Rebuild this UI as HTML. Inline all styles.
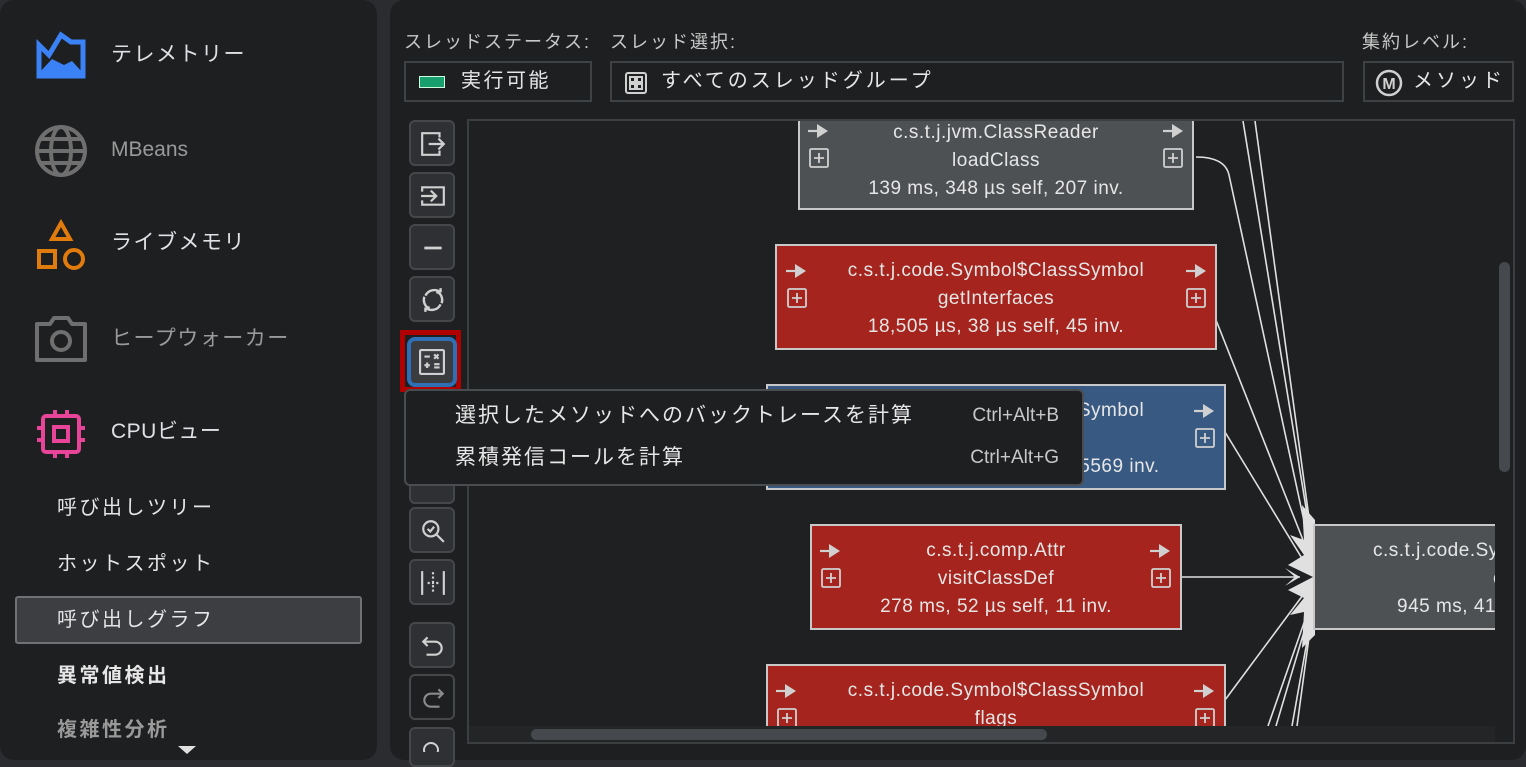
<!DOCTYPE html>
<html><head><meta charset="utf-8"><style>
*{margin:0;padding:0;box-sizing:border-box}
body{width:1526px;height:763px;background:#2a2c2f;position:relative;overflow:hidden;font-family:"Liberation Sans","Noto Sans CJK JP",sans-serif;color:#dfe1e5}
.a{position:absolute}
.panel{position:absolute;background:#1e1f21;border-radius:14px}
.nav{position:absolute;left:111px;font-size:21px;line-height:28px;color:#dfe1e5;letter-spacing:1.5px}
.sub{position:absolute;left:57px;font-size:20px;line-height:28px;color:#e6e6e6;letter-spacing:2.5px}
.lbl{position:absolute;top:30px;font-size:18px;color:#c8c8c8;line-height:24px;letter-spacing:2px}
.combo{position:absolute;top:61px;height:41px;border:2px solid #3f4245;background:#1e1f21;font-size:20px;line-height:37px;color:#e6e6e6}
.btn{position:absolute;left:409px;width:46px;height:46px;background:#2e3033;border:2px solid #45484b;border-radius:6px}
.btn svg{position:absolute;left:9px;top:9px}
.node{position:absolute;border:2px solid #c8c8c8;font-size:19px;color:#e6e6e6;letter-spacing:0.5px}
.node .t{position:absolute;left:0;right:0;text-align:center;line-height:22px}
</style></head><body>
<div class="panel" style="left:0;top:0;width:377px;height:760px"></div>
<div class="panel" style="left:390px;top:0;width:1136px;height:760px"></div>

<svg class="a" style="left:36px;top:31px" width="50" height="48" viewBox="0 0 50 48"><path d="M3 14 L13 24 L25 4 L35 11 L47 11 L47 45 L3 45 Z" fill="none" stroke="#3b82f6" stroke-width="5"/><path d="M3 42 L16 28 L28 34 L36 30 L47 42 L47 45 L3 45Z" fill="#3b82f6"/></svg>
<svg class="a" style="left:34px;top:124px" width="54" height="54" viewBox="0 0 54 54" fill="none" stroke="#6f6f6f" stroke-width="4"><circle cx="27" cy="27" r="24"/><ellipse cx="27" cy="27" rx="10" ry="24"/><path d="M3 27H51M6 15H48M6 39H48"/></svg>
<svg class="a" style="left:36px;top:218px" width="52" height="52" viewBox="0 0 52 52" fill="none" stroke="#e07b0c" stroke-width="4"><path d="M16 21 L25 5 L34 21Z"/><rect x="3" y="33" width="16" height="16"/><circle cx="38" cy="41" r="9"/></svg>
<svg class="a" style="left:34px;top:314px" width="54" height="50" viewBox="0 0 54 50" fill="none" stroke="#6f6f6f" stroke-width="4"><path d="M3 10 H16 L20 4 H34 L38 10 H51 V46 H3Z" stroke-linejoin="round"/><circle cx="27" cy="27" r="9"/></svg>
<svg class="a" style="left:36px;top:409px" width="50" height="50" viewBox="0 0 50 50" fill="none" stroke="#e8459a" stroke-width="4"><rect x="7" y="7" width="36" height="36" rx="3"/><rect x="18" y="18" width="14" height="14"/><path d="M19 1V7M31 1V7M19 43V49M31 43V49M1 19H7M1 31H7M43 19H49M43 31H49"/></svg>

<div class="nav" style="top:41px">テレメトリー</div>
<div class="nav" style="top:136px;color:#9a9a9a;letter-spacing:0">MBeans</div>
<div class="nav" style="top:229px">ライブメモリ</div>
<div class="nav" style="top:325px;color:#9a9a9a">ヒープウォーカー</div>
<div class="nav" style="top:418px;letter-spacing:0.5px">CPUビュー</div>

<div class="a" style="left:15px;top:596px;width:347px;height:48px;background:#3c3e41;border:2px solid #6f7174;border-radius:3px"></div>
<div class="sub" style="top:494px">呼び出しツリー</div>
<div class="sub" style="top:550px">ホットスポット</div>
<div class="sub" style="top:606px">呼び出しグラフ</div>
<div class="sub" style="top:662px;font-weight:bold">異常値検出</div>
<div class="sub" style="top:716px;color:#9a9a9a;font-weight:bold;height:24px;overflow:hidden">複雑性分析</div>
<div class="a" style="left:178px;top:746px;width:0;height:0;border-left:9px solid transparent;border-right:9px solid transparent;border-top:8px solid #e0e0e0"></div>

<div class="lbl" style="left:404px">スレッドステータス:</div>
<div class="lbl" style="left:610px">スレッド選択:</div>
<div class="lbl" style="left:1362px">集約レベル:</div>
<div class="combo" style="left:404px;width:188px"><span class="a" style="left:13px;top:13px;width:26px;height:12px;background:#17a06e;border:1px solid #cfd"></span><span class="a" style="left:55px;top:0;letter-spacing:2.5px">実行可能</span></div>
<div class="combo" style="left:610px;width:734px"><svg class="a" style="left:13px;top:9px" width="22" height="22" viewBox="0 0 22 22" fill="none" stroke="#d0d0d0" stroke-width="2"><rect x="1" y="1" width="20" height="20" rx="2"/><rect x="5" y="5" width="5" height="5"/><rect x="12" y="5" width="5" height="5"/><rect x="5" y="12" width="5" height="5"/><rect x="12" y="12" width="5" height="5"/></svg><span class="a" style="left:49px;top:0;letter-spacing:3px">すべてのスレッドグループ</span></div>
<div class="combo" style="left:1363px;width:151px"><svg class="a" style="left:10px;top:6px" width="28" height="28" viewBox="0 0 28 28"><circle cx="14" cy="14" r="12" fill="none" stroke="#d0d0d0" stroke-width="2.5"/><text x="14" y="20" font-size="16" font-weight="bold" text-anchor="middle" fill="#d0d0d0" font-family="Liberation Sans">M</text></svg><span class="a" style="left:48px;top:0;letter-spacing:3px">メソッド</span></div>

<div class="btn" style="top:120px"><svg width="26" height="26" viewBox="0 0 24 24" fill="none" stroke="#d0d0d0" stroke-width="2"><path d="M18 6V2H2V22H18V18"/><path d="M8 12H22M17 7L22 12L17 17"/></svg></div>
<div class="btn" style="top:172px"><svg width="26" height="26" viewBox="0 0 24 24" fill="none" stroke="#d0d0d0" stroke-width="2"><path d="M2 8V4H22V20H2V16"/><path d="M1 12H15M10 7L15 12L10 17"/></svg></div>
<div class="btn" style="top:224px"><svg width="26" height="26" viewBox="0 0 24 24" stroke="#d0d0d0" stroke-width="2.5"><path d="M4 12H20"/></svg></div>
<div class="btn" style="top:276px"><svg width="26" height="26" viewBox="0 0 24 24" fill="none" stroke="#d0d0d0" stroke-width="2.2"><path d="M5 8A9 9 0 0 1 19 5M19 5L19 1M19 5L15 5"/><path d="M19 16A9 9 0 0 1 5 19M5 19L5 23M5 19L9 19"/><path d="M4 9A9 9 0 0 0 7 19M20 15A9 9 0 0 0 17 5"/></svg></div>
<div class="a" style="left:400px;top:330px;width:61px;height:62px;background:#1e1f21;border:5px solid #b00000"></div>
<div class="btn" style="top:337px;left:407px;width:50px;height:50px;border:4px solid #2f6fb5;border-radius:8px;background:#3a3c3f"><svg style="left:8px;top:8px" width="26" height="26" viewBox="0 0 24 24" fill="none" stroke="#d0d0d0" stroke-width="2"><rect x="1" y="1" width="22" height="22" rx="1"/><path d="M5 7H10M14 5L18 9M18 5L14 9M5 15H10M7.5 12.5V17.5M14 14H19M14 17H19"/></svg></div>
<div class="btn" style="top:458px"></div>
<div class="btn" style="top:507px"><svg width="26" height="26" viewBox="0 0 24 24" fill="none" stroke="#d0d0d0" stroke-width="2"><circle cx="10" cy="10" r="7"/><path d="M15 15L22 22M7 10L9.5 12.5L13 8"/></svg></div>
<div class="btn" style="top:559px"><svg width="26" height="26" viewBox="0 0 24 24" fill="none" stroke="#d0d0d0" stroke-width="2"><path d="M2 1V23M22 1V23"/><path d="M12 2V22M7 12H17" stroke-dasharray="2 2"/></svg></div>
<div class="btn" style="top:622px"><svg width="26" height="26" viewBox="0 0 24 24" fill="none" stroke="#d0d0d0" stroke-width="2"><path d="M7 4L3 8L7 12M3 8H14A5 5 0 0 1 14 20H6"/></svg></div>
<div class="btn" style="top:674px;background:#1e1f21"><svg width="26" height="26" viewBox="0 0 24 24" fill="none" stroke="#8a8a8a" stroke-width="2"><path d="M17 4L21 8L17 12M21 8H10A5 5 0 0 0 10 20H18"/></svg></div>
<div class="btn" style="top:727px;height:40px"><svg width="26" height="14" viewBox="0 0 24 14" fill="none" stroke="#d0d0d0" stroke-width="2"><circle cx="10" cy="12" r="7"/></svg></div>

<div class="a" style="left:467px;top:119px;width:1048px;height:625px;border:2px solid #3c3f41;background:#1f2022"></div>
<div class="a" style="left:469px;top:121px;width:1026px;height:605px;overflow:hidden">
<svg class="a" style="left:0;top:0" width="1026" height="605" viewBox="469 121 1026 605" fill="none" stroke="#e0e0e0" stroke-width="1.6">
<path d="M1243 121 L1308 520M1255 121 L1310 525M1196 157 Q1225 157 1229 175 L1306 530M1216 320 L1303 540M1225 432 L1303 560M1181 577 L1300 577M1225 700 L1303 595M1268 726 L1305 620M1276 726 L1306 625M1292 726 L1309 630M1297 726 L1310 630"/>
<g fill="#e0e0e0" stroke="none">
<path d="M1300 577 L1285 568 L1295 577 L1285 586Z"/>
<path d="M1315 520 L1302 505 L1304 540 L1290 535 L1304 555 L1288 565 L1313 577 L1288 590 L1304 598 L1290 615 L1304 612 L1302 648 L1315 635Z"/>
</g>
</svg>

<div class="node" style="left:329px;top:-8px;width:396px;height:97px;background:#4e5154">
<div class="t" style="top:7px">c.s.t.j.jvm.ClassReader</div><div class="t" style="top:35px">loadClass</div><div class="t" style="top:63px">139 ms, 348 µs self, 207 inv.</div></div>
<div class="node" style="left:306px;top:123px;width:442px;height:106px;background:#a5241d">
<div class="t" style="top:14px">c.s.t.j.code.Symbol$ClassSymbol</div><div class="t" style="top:42px">getInterfaces</div><div class="t" style="top:70px">18,505 µs, 38 µs self, 45 inv.</div></div>
<div class="node" style="left:297px;top:263px;width:460px;height:106px;background:#385a82">
<div class="t" style="top:14px">c.s.t.j.code.Symbol$ClassSymbol</div><div class="t" style="top:42px">x</div><div class="t" style="top:70px">31,234 µs, 11,356 µs self, 15569 inv.</div></div>
<div class="node" style="left:341px;top:403px;width:372px;height:106px;background:#a5241d">
<div class="t" style="top:14px">c.s.t.j.comp.Attr</div><div class="t" style="top:42px">visitClassDef</div><div class="t" style="top:70px">278 ms, 52 µs self, 11 inv.</div></div>
<div class="node" style="left:297px;top:543px;width:460px;height:106px;background:#a5241d">
<div class="t" style="top:14px">c.s.t.j.code.Symbol$ClassSymbol</div><div class="t" style="top:42px">flags</div></div>
<div class="node" style="left:844px;top:403px;width:300px;height:106px;background:#4e5154">
<div class="t" style="top:14px;text-align:left;left:58px">c.s.t.j.code.Symbol</div><div class="t" style="top:42px;text-align:left;left:178px">c</div><div class="t" style="top:70px;text-align:left;left:82px">945 ms, 41</div></div>

<svg class="a" style="left:0;top:0" width="1026" height="605" viewBox="469 121 1026 605">
<defs><g id="ar"><path d="M0 0H12" stroke="#d0d0d0" stroke-width="2.2"/><path d="M9 -7L20 0L9 7Z" fill="#d0d0d0"/></g>
<g id="pl" fill="none" stroke="#d0d0d0" stroke-width="1.8"><rect x="0" y="0" width="18" height="18" rx="1.5"/><path d="M9 4V14M4 9H14"/></g></defs>
<use href="#ar" x="808" y="131"/><use href="#pl" x="810" y="149"/><use href="#ar" x="1163" y="131"/><use href="#pl" x="1164" y="149"/>
<use href="#ar" x="786" y="271"/><use href="#pl" x="788" y="289"/><use href="#ar" x="1186" y="271"/><use href="#pl" x="1187" y="289"/>
<use href="#ar" x="1194" y="411"/><use href="#pl" x="1196" y="429"/>
<use href="#ar" x="820" y="551"/><use href="#pl" x="822" y="569"/><use href="#ar" x="1150" y="551"/><use href="#pl" x="1152" y="569"/>
<use href="#ar" x="776" y="691"/><use href="#pl" x="778" y="709"/><use href="#ar" x="1194" y="691"/><use href="#pl" x="1196" y="709"/>
</svg>
</div>
<div class="a" style="left:469px;top:726px;width:1026px;height:16px;background:#232527"></div>
<div class="a" style="left:531px;top:729px;width:516px;height:11px;background:#45494d;border-radius:6px"></div>
<div class="a" style="left:1499px;top:262px;width:11px;height:210px;background:#45494d;border-radius:6px"></div>

<div class="a" style="left:404px;top:389px;width:680px;height:97px;background:#1e1f21;border:2px solid #4a4d50;border-radius:6px">
<div class="a" style="left:49px;top:11px;font-size:21px;line-height:28px;color:#e6e6e6;letter-spacing:2px">選択したメソッドへのバックトレースを計算</div>
<div class="a" style="left:49px;top:53px;font-size:21px;line-height:28px;color:#e6e6e6;letter-spacing:2px">累積発信コールを計算</div>
<div class="a" style="right:23px;top:12px;font-size:19px;line-height:26px;color:#c8c8c8">Ctrl+Alt+B</div>
<div class="a" style="right:23px;top:54px;font-size:19px;line-height:26px;color:#c8c8c8">Ctrl+Alt+G</div>
</div>
</body></html>
